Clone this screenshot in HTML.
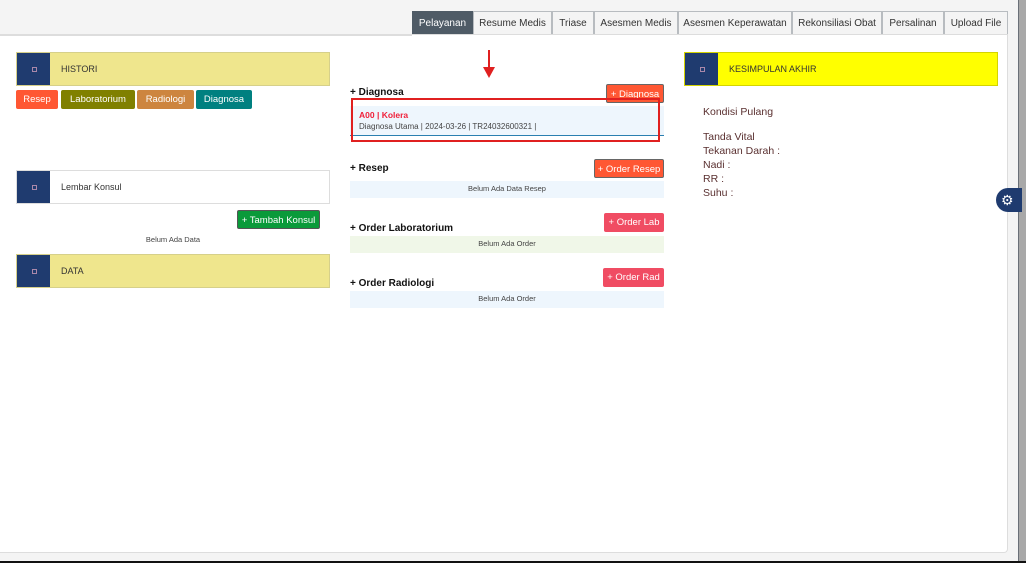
<!DOCTYPE html>
<html><head><style>
body{margin:0;width:1026px;height:563px;background:#f4f4f4;font-family:"Liberation Sans",sans-serif;position:relative;overflow:hidden}
.a{position:absolute}
.tab{position:absolute;top:11px;height:23px;border:1px solid #b8bcc0;background:#f4f4f4;font-size:10px;color:#333;line-height:23px;text-align:center;box-sizing:border-box;border-bottom:none}
.hdr{position:absolute;height:34px;border:1px solid #d6d08a;box-sizing:border-box;font-size:9px;color:#333;line-height:32px}
.hdr .ic{position:absolute;left:0;top:0;width:33px;height:32px;background:#1f3b6f}
.hdr .ic:after{content:"";position:absolute;left:15px;top:14px;width:3px;height:3px;border:1px solid #a8a;}
.hdr span{position:absolute;left:44px}
.btn{position:absolute;height:19px;color:#fff;font-size:9.5px;line-height:19px;text-align:center;border-radius:2px;box-sizing:border-box}
.t{position:absolute;font-size:10px;color:#111;font-weight:bold}
.nd{position:absolute;font-size:7.5px;color:#444;text-align:center}
.r{position:absolute;left:703px;font-size:10.5px;color:#5a3030}
</style></head><body>
<div class="a" style="left:0;top:34px;width:1008px;height:519px;background:#fff;border:1px solid #ddd;border-left:none;border-radius:0 0 4px 0;box-sizing:border-box"></div>
<div class="a" style="left:0;top:35px;width:412px;height:1px;background:#ddd"></div>
<div class="a" style="left:1018px;top:0;width:8px;height:561px;background:#a8a8a8;border-left:1px solid #6a7078"></div>
<div class="a" style="left:0;top:561px;width:1026px;height:2px;background:#111"></div>
<div class="tab" style="left:412px;width:61px;background:#4f5b66;color:#fff;border-color:#4f5b66">Pelayanan</div>
<div class="tab" style="left:473px;width:79px">Resume Medis</div>
<div class="tab" style="left:552px;width:42px">Triase</div>
<div class="tab" style="left:594px;width:84px">Asesmen Medis</div>
<div class="tab" style="left:678px;width:114px">Asesmen Keperawatan</div>
<div class="tab" style="left:792px;width:90px">Rekonsiliasi Obat</div>
<div class="tab" style="left:882px;width:62px">Persalinan</div>
<div class="tab" style="left:944px;width:64px">Upload File</div>

<div class="hdr" style="left:16px;top:52px;width:314px;background:#efe68d"><div class="ic"></div><span>HISTORI</span></div>
<div class="btn" style="left:16px;top:90px;width:42px;background:#ff5733">Resep</div>
<div class="btn" style="left:61px;top:90px;width:74px;background:#808000">Laboratorium</div>
<div class="btn" style="left:137px;top:90px;width:57px;background:#cd853f">Radiologi</div>
<div class="btn" style="left:196px;top:90px;width:56px;background:#008080">Diagnosa</div>
<div class="hdr" style="left:16px;top:170px;width:314px;background:#fff;border-color:#ddd"><div class="ic"></div><span>Lembar Konsul</span></div>
<div class="btn" style="left:237px;top:210px;width:83px;background:#0a9a3a;border:1px solid #555">+ Tambah Konsul</div>
<div class="nd" style="left:16px;top:235px;width:314px">Belum Ada Data</div>
<div class="hdr" style="left:16px;top:254px;width:314px;background:#efe68d"><div class="ic"></div><span>DATA</span></div>

<svg class="a" style="left:482px;top:50px" width="14" height="30"><line x1="7" y1="0" x2="7" y2="20" stroke="#e02020" stroke-width="2"/><polygon points="1,17 13,17 7,28" fill="#e02020"/></svg>
<div class="t" style="left:350px;top:87px">+ Diagnosa</div>
<div class="btn" style="left:606px;top:84px;width:58px;background:#ff5733;border:1px solid #666">+ Diagnosa</div>
<div class="a" style="left:350px;top:106px;width:314px;height:29px;background:#eef6fd;border-bottom:1px solid #2a7fb0"></div>
<div class="a" style="left:351px;top:98px;width:309px;height:44px;border:2px solid #e02020;box-sizing:border-box"></div>
<div class="a" style="left:359px;top:110px;font-size:8.5px;color:#f0203a;font-weight:bold">A00 | Kolera</div>
<div class="a" style="left:359px;top:122px;font-size:8px;color:#444">Diagnosa Utama | 2024-03-26 | TR24032600321 |</div>
<div class="t" style="left:350px;top:163px">+ Resep</div>
<div class="btn" style="left:594px;top:159px;width:70px;background:#ff5733;border:1px solid #666">+ Order Resep</div>
<div class="a" style="left:350px;top:181px;width:314px;height:17px;background:#eef6fd"></div>
<div class="nd" style="left:350px;top:184px;width:314px">Belum Ada Data Resep</div>
<div class="t" style="left:350px;top:223px">+ Order Laboratorium</div>
<div class="btn" style="left:604px;top:213px;width:60px;background:#f04c63">+ Order Lab</div>
<div class="a" style="left:350px;top:236px;width:314px;height:17px;background:#f0f7e8"></div>
<div class="nd" style="left:350px;top:239px;width:314px">Belum Ada Order</div>
<div class="t" style="left:350px;top:278px">+ Order Radiologi</div>
<div class="btn" style="left:603px;top:268px;width:61px;background:#f04c63">+ Order Rad</div>
<div class="a" style="left:350px;top:291px;width:314px;height:17px;background:#eef6fd"></div>
<div class="nd" style="left:350px;top:294px;width:314px">Belum Ada Order</div>

<div class="hdr" style="left:684px;top:52px;width:314px;background:#ffff00;border-color:#d4d400"><div class="ic" style="width:33px"></div><span>KESIMPULAN AKHIR</span></div>
<div class="r" style="top:106px">Kondisi Pulang</div>
<div class="r" style="top:131px">Tanda Vital</div>
<div class="r" style="top:145px">Tekanan Darah :</div>
<div class="r" style="top:159px">Nadi :</div>
<div class="r" style="top:173px">RR :</div>
<div class="r" style="top:187px">Suhu :</div>
<div class="a" style="left:996px;top:188px;width:26px;height:24px;background:#1f3b6f;border-radius:12px 0 0 12px;color:#fff;font-size:14px;line-height:24px;text-indent:5px">⚙</div>
</body></html>
